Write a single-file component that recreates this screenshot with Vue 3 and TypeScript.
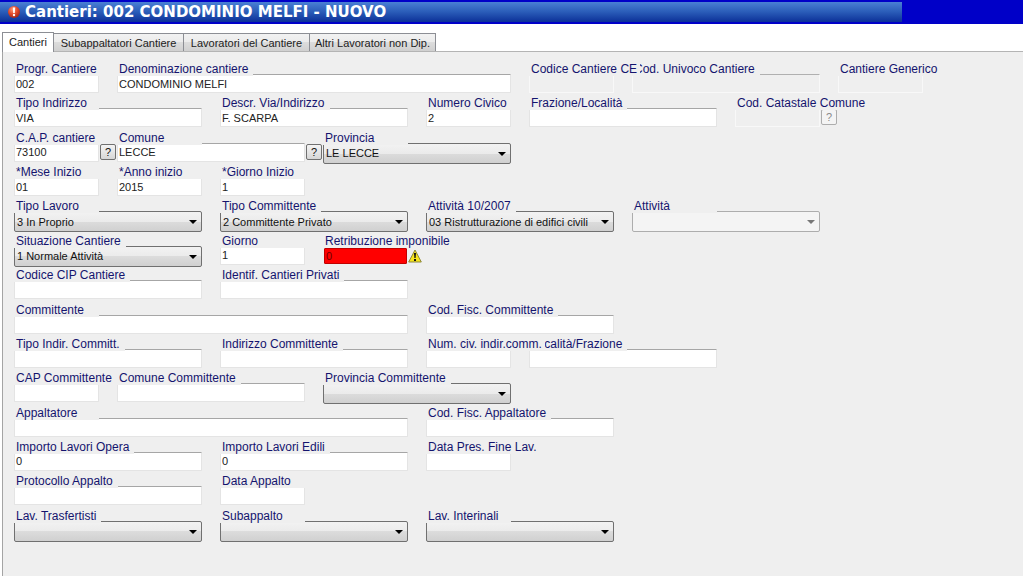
<script setup lang="ts">
import { ref } from 'vue'

interface Field {
  id: string
  label: string
  row: number
  col: number
  span: number
  kind?: 'text' | 'select'
  value?: string
  disabled?: boolean
  lookup?: boolean
  error?: boolean
  front?: boolean
}

const tabs = ['Cantieri', 'Subappaltatori Cantiere', 'Lavoratori del Cantiere', 'Altri Lavoratori non Dip.']
const activeTab = ref(0)

const fields = ref<Field[]>([
  { id: 'progr', label: 'Progr. Cantiere', row: 1, col: 1, span: 1, value: '002' },
  { id: 'denominazione', label: 'Denominazione cantiere', row: 1, col: 2, span: 4, value: 'CONDOMINIO MELFI' },
  { id: 'codice-ce', label: 'Codice Cantiere CE', row: 1, col: 6, span: 1, disabled: true, front: true },
  { id: 'cod-univoco', label: 'Cod. Univoco Cantiere', row: 1, col: 7, span: 2, disabled: true },
  { id: 'generico', label: 'Cantiere Generico', row: 1, col: 9, span: 1, disabled: true },
  { id: 'tipo-indirizzo', label: 'Tipo Indirizzo', row: 2, col: 1, span: 2, value: 'VIA' },
  { id: 'descr-via', label: 'Descr. Via/Indirizzo', row: 2, col: 3, span: 2, value: 'F. SCARPA' },
  { id: 'civico', label: 'Numero Civico', row: 2, col: 5, span: 1, value: '2' },
  { id: 'frazione', label: 'Frazione/Località', row: 2, col: 6, span: 2 },
  { id: 'catastale', label: 'Cod. Catastale Comune', row: 2, col: 8, span: 1, disabled: true, lookup: true },
  { id: 'cap', label: 'C.A.P. cantiere', row: 3, col: 1, span: 1, value: '73100', lookup: true },
  { id: 'comune', label: 'Comune', row: 3, col: 2, span: 2, value: 'LECCE', lookup: true },
  { id: 'provincia', label: 'Provincia', row: 3, col: 4, span: 2, kind: 'select', value: 'LE LECCE' },
  { id: 'mese', label: '*Mese Inizio', row: 4, col: 1, span: 1, value: '01' },
  { id: 'anno', label: '*Anno inizio', row: 4, col: 2, span: 1, value: '2015' },
  { id: 'giorno-inizio', label: '*Giorno Inizio', row: 4, col: 3, span: 1, value: '1' },
  { id: 'tipo-lavoro', label: 'Tipo Lavoro', row: 5, col: 1, span: 2, kind: 'select', value: '3 In Proprio' },
  { id: 'tipo-committente', label: 'Tipo Committente', row: 5, col: 3, span: 2, kind: 'select', value: '2 Committente Privato' },
  { id: 'attivita-2007', label: 'Attività 10/2007', row: 5, col: 5, span: 2, kind: 'select', value: '03 Ristrutturazione di edifici civili' },
  { id: 'attivita', label: 'Attività', row: 5, col: 7, span: 2, kind: 'select', disabled: true },
  { id: 'situazione', label: 'Situazione Cantiere', row: 6, col: 1, span: 2, kind: 'select', value: '1 Normale Attività' },
  { id: 'giorno', label: 'Giorno', row: 6, col: 3, span: 1, value: '1' },
  { id: 'retribuzione', label: 'Retribuzione imponibile', row: 6, col: 4, span: 1, value: '0', error: true },
  { id: 'cip', label: 'Codice CIP Cantiere', row: 7, col: 1, span: 2 },
  { id: 'identif', label: 'Identif. Cantieri Privati', row: 7, col: 3, span: 2 },
  { id: 'committente', label: 'Committente', row: 8, col: 1, span: 4 },
  { id: 'cf-committente', label: 'Cod. Fisc. Committente', row: 8, col: 5, span: 2 },
  { id: 'tipo-indir-committ', label: 'Tipo Indir. Committ.', row: 9, col: 1, span: 2 },
  { id: 'indirizzo-committente', label: 'Indirizzo Committente', row: 9, col: 3, span: 2 },
  { id: 'civico-committente', label: 'Num. civ. indir.comm.', row: 9, col: 5, span: 1, front: true },
  { id: 'localita', label: 'Località/Frazione', row: 9, col: 6, span: 2 },
  { id: 'cap-committente', label: 'CAP Committente', row: 10, col: 1, span: 1 },
  { id: 'comune-committente', label: 'Comune Committente', row: 10, col: 2, span: 2 },
  { id: 'provincia-committente', label: 'Provincia Committente', row: 10, col: 4, span: 2, kind: 'select' },
  { id: 'appaltatore', label: 'Appaltatore', row: 11, col: 1, span: 4 },
  { id: 'cf-appaltatore', label: 'Cod. Fisc. Appaltatore', row: 11, col: 5, span: 2 },
  { id: 'importo-opera', label: 'Importo Lavori Opera', row: 12, col: 1, span: 2, value: '0' },
  { id: 'importo-edili', label: 'Importo Lavori Edili', row: 12, col: 3, span: 2, value: '0' },
  { id: 'fine-lavori', label: 'Data Pres. Fine Lav.', row: 12, col: 5, span: 1 },
  { id: 'protocollo', label: 'Protocollo Appalto', row: 13, col: 1, span: 2 },
  { id: 'data-appalto', label: 'Data Appalto', row: 13, col: 3, span: 1 },
  { id: 'trasfertisti', label: 'Lav. Trasfertisti', row: 14, col: 1, span: 2, kind: 'select' },
  { id: 'subappalto', label: 'Subappalto', row: 14, col: 3, span: 2, kind: 'select' },
  { id: 'interinali', label: 'Lav. Interinali', row: 14, col: 5, span: 2, kind: 'select' },
])

const place = (f: Field) => ({ gridRow: f.row, gridColumn: `${f.col} / span ${f.span}` })
</script>

<template>
  <div class="page">
    <header class="titlebar">
      <div class="titlebar-fill">
        <svg class="title-icon" viewBox="0 0 14 14" aria-hidden="true">
          <defs>
            <radialGradient id="ball" cx="40%" cy="30%" r="70%">
              <stop offset="0" stop-color="#ff9c78" />
              <stop offset="0.55" stop-color="#e2492a" />
              <stop offset="1" stop-color="#a32a1c" />
            </radialGradient>
          </defs>
          <circle cx="7" cy="7" r="6" fill="url(#ball)" />
          <path d="M5.8 2.500h2.400L7.800 8H6.200z" fill="#fff" />
          <circle cx="7" cy="10" r="1.200" fill="#fff" />
        </svg>
        <h1>Cantieri: 002 CONDOMINIO MELFI - NUOVO</h1>
      </div>
    </header>

    <nav class="tabs" role="tablist">
      <button
        v-for="(tab, i) in tabs"
        :key="tab"
        type="button"
        role="tab"
        class="tab"
        :class="{ active: i === activeTab }"
        :aria-selected="i === activeTab"
        @click="activeTab = i"
      >{{ tab }}</button>
    </nav>

    <main class="panel">
      <form class="form" @submit.prevent>
        <div v-for="f in fields" :key="f.id" class="field" :class="{ error: f.error }" :style="place(f)">
          <label :for="f.id" :class="{ front: f.front }">{{ f.label }}</label>
          <div v-if="f.kind === 'select'" class="select" :class="{ disabled: f.disabled }">
            <select :id="f.id" :disabled="f.disabled">
              <option>{{ f.value }}</option>
            </select>
          </div>
          <input v-else :id="f.id" v-model="f.value" type="text" :disabled="f.disabled" />
          <button v-if="f.lookup" type="button" class="lookup" :disabled="f.disabled" :aria-label="'Cerca ' + f.label">?</button>
          <svg v-if="f.error" class="warning" viewBox="0 0 14 14" aria-hidden="true">
            <path d="M7 1 13.300 13H.7z" fill="#f7e51c" stroke="#8d8738" stroke-linejoin="round" />
            <path d="M6 4h2l-.4 5H6.400z" fill="#111" />
            <rect x="6" y="10" width="2" height="2" fill="#111" />
          </svg>
        </div>
      </form>
    </main>
  </div>
</template>

<style>
body {
  background: #fff;
}
</style>

<style scoped>
.page {
  display: flex;
  flex-direction: column;
  min-height: 100vh;
  overflow: hidden;
  background: #fff;
  font-family: "Liberation Sans", Arial, sans-serif;
  font-size: 11px;
  color: #222;
}
.titlebar {
  padding: 2px 121px 2px 0;
  background: #0000c8;
}
.titlebar-fill {
  display: flex;
  align-items: center;
  gap: 4px;
  height: 20px;
  padding-left: 7px;
  background: linear-gradient(#4a80d4, #2a5cb8 50%, #0c3098);
}
.title-icon {
  width: 14px;
  height: 14px;
}
h1 {
  margin: 0;
  font: bold 15px/20px "DejaVu Sans", Verdana, sans-serif;
  color: #fff;
  white-space: nowrap;
}
.tabs {
  display: flex;
  align-items: flex-end;
  height: 20px;
  padding: 7px 0 0 2px;
  position: relative;
  z-index: 2;
}
.tab {
  box-sizing: border-box;
  height: 18px;
  padding: 0 4px;
  min-width: 126px;
  border: 1px solid #8c8e94;
  border-left-width: 0;
  border-bottom: 0;
  background: linear-gradient(#f2f2f2, #ebebeb 50%, #dcdcdc 50%, #d0d0d0);
  font: inherit;
  color: #222;
  white-space: nowrap;
}
.tab:nth-child(2) {
  min-width: 130px;
}
.tab.active {
  height: 20px;
  min-width: 52px;
  margin-bottom: -1px;
  padding-bottom: 2px;
  border-left-width: 1px;
  background: #fff;
}
.panel {
  flex: 1;
  margin-left: 2px;
  padding: 10px 0 22px 11px;
  border-top: 1px solid #b4b4b4;
  border-left: 1px solid #a4a4a4;
  background: #efefef;
}
.form {
  display: grid;
  grid-template-columns: repeat(9, minmax(0, 1fr));
  grid-auto-rows: 1fr;
  column-gap: 18px;
  max-width: 909px;
  min-height: 481px;
}
.field {
  position: relative;
  min-width: 0;
}
label {
  display: block;
  box-sizing: border-box;
  position: relative;
  z-index: 1;
  width: max-content;
  min-width: 85px;
  height: 14px;
  margin-bottom: -2px;
  padding: 0 5px 0 2px;
  background: #efefef;
  font-size: 12px;
  line-height: 14px;
  color: #14146e;
  white-space: nowrap;
}
label.front {
  z-index: 2;
  padding-right: 3px;
}
input {
  display: block;
  box-sizing: border-box;
  width: 100%;
  height: 19px;
  padding: 0 1px;
  border: 1px solid #e4e4e4;
  border-top-color: #a6a6a6;
  border-radius: 1px;
  background: #fff;
  font: inherit;
  color: #222;
}
input:disabled {
  border-color: #b0b0b0 #f8f8f8 #f8f8f8;
  background: #efefef;
}
.select {
  position: relative;
}
.select::after {
  content: "";
  position: absolute;
  top: 9px;
  right: 5px;
  border: 4px solid transparent;
  border-top: 4px solid #000;
  border-bottom: 0;
  pointer-events: none;
}
.select.disabled::after {
  border-top-color: #777;
}
select {
  display: block;
  box-sizing: border-box;
  appearance: none;
  width: 100%;
  height: 21px;
  padding: 0 16px 0 2px;
  border: 1px solid #707070;
  border-radius: 2px;
  background: linear-gradient(#f2f2f2, #ebebeb 50%, #dcdcdc 50%, #d0d0d0);
  font: inherit;
  color: #111;
}
select:disabled {
  border-color: #adadad;
  background: #f4f4f4;
  opacity: 1;
}
.lookup {
  position: absolute;
  top: 13px;
  left: 100%;
  width: 16px;
  height: 16px;
  margin-left: 1px;
  padding: 0;
  border: 1px solid #707070;
  border-radius: 2px;
  background: linear-gradient(#f4f4f4, #d6d6d6);
  font: inherit;
  color: #111;
}
.lookup:disabled {
  border-color: #adadad;
  background: #f4f4f4;
  color: #8a8a8a;
}
.error label {
  margin-bottom: 0;
}
.error input {
  width: calc(100% - 2px);
  height: 16px;
  margin: 0 1px;
  border-color: #c00000;
  background: #f00;
  color: #700000;
}
.warning {
  position: absolute;
  top: 15px;
  left: 100%;
  width: 14px;
  height: 14px;
}
</style>
